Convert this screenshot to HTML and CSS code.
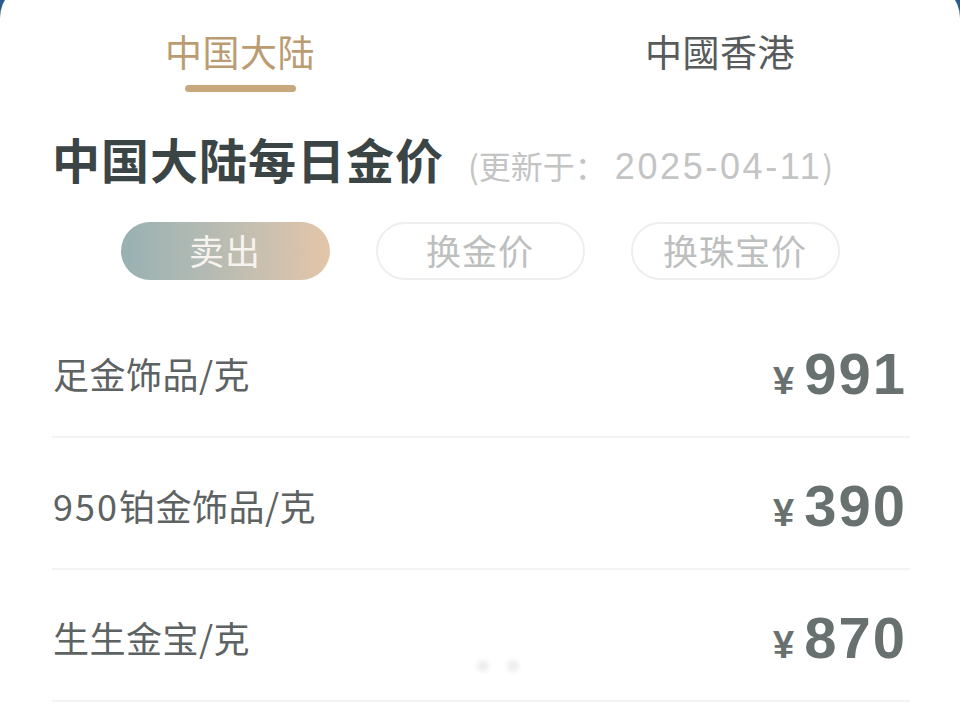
FILE: index.html
```html
<!DOCTYPE html>
<html lang="zh-CN">
<head>
<meta charset="utf-8">
<title>每日金价</title>
<link rel="stylesheet" href="styles.css">
</head>
<body>
<div class="card">
  <div class="tabs">
    <div class="tab active"><span class="tab-label">中国大陆</span><span class="tab-bar"></span></div>
    <div class="tab"><span class="tab-label">中國香港</span></div>
  </div>
  <div class="title-row">
    <span class="title">中国大陆每日金价</span>
    <span class="updated">(更新于：<span class="date">2025-04-11</span>)</span>
  </div>
  <div class="pills">
    <div class="pill pill-active">卖出</div>
    <div class="pill">换金价</div>
    <div class="pill">换珠宝价</div>
  </div>
  <div class="rows">
    <div class="row">
      <span class="label">足金饰品/克</span>
      <span class="price"><span class="yen">¥</span><span class="num">991</span></span>
    </div>
    <div class="row">
      <span class="label"><span class="digits">950</span>铂金饰品/克</span>
      <span class="price"><span class="yen">¥</span><span class="num">390</span></span>
    </div>
    <div class="row row-last">
      <span class="label">生生金宝/克</span>
      <span class="price"><span class="yen">¥</span><span class="num">870</span></span>
      <span class="dot dot-1"></span>
      <span class="dot dot-2"></span>
    </div>
  </div>
</div>
</body>
</html>
```

FILE: styles.css
```css
html, body {
  margin: 0;
  padding: 0;
}
body {
  background: #2b5b8c;
  font-family: "Liberation Sans", "Noto Sans CJK SC", sans-serif;
  overflow: hidden;
  height: 718px;
}
.card {
  background: #ffffff;
  margin-top: -17px;
  border-radius: 35px 35px 0 0;
  height: 760px;
  padding-top: 46px;
  box-sizing: border-box;
}
.tabs {
  display: flex;
}
.tab {
  flex: 1;
  display: flex;
  flex-direction: column;
  align-items: center;
}
.tab-label {
  font-family: "Noto Sans CJK SC", sans-serif;
  font-size: 37px;
  line-height: 44px;
  color: #575b5b;
  letter-spacing: 0.5px;
}
.tab.active .tab-label {
  color: #bb9c72;
}
.tab-bar {
  display: block;
  width: 111px;
  height: 7px;
  margin-top: 12px;
  border-radius: 4px;
  background: #c8a87c;
}
.title-row {
  display: flex;
  align-items: baseline;
  margin-top: 36px;
  padding-left: 52px;
  height: 60px;
}
.title {
  font-family: "Noto Sans CJK SC", sans-serif;
  font-weight: 700;
  font-size: 48px;
  line-height: 60px;
  color: #3b4545;
  letter-spacing: 1px;
}
.updated {
  font-family: "Noto Sans CJK SC", sans-serif;
  font-size: 32px;
  color: #c3c4c4;
  margin-left: 24px;
}
.date {
  font-family: "Liberation Sans", sans-serif;
  font-size: 36px;
  letter-spacing: 2.6px;
  margin-left: 8px;
}
.pills {
  display: flex;
  justify-content: center;
  gap: 46px;
  margin-top: 34px;
}
.pill {
  width: 209px;
  height: 58px;
  box-sizing: border-box;
  border: 2px solid #eeeeee;
  border-radius: 29px;
  display: flex;
  align-items: center;
  justify-content: center;
  font-family: "Noto Sans CJK SC", sans-serif;
  font-size: 35px;
  color: #bdbebe;
  letter-spacing: 1px;
  padding-bottom: 3px;
}
.pill-active {
  border: none;
  background: linear-gradient(90deg, #98b1b2 0%, #b3bab3 40%, #cfc1af 75%, #e4c5a8 100%);
  color: #f7f3ee;
}
.rows {
  margin: 26px 50px 0 52px;
}
.row {
  position: relative;
  height: 132px;
  box-sizing: border-box;
  border-bottom: 2px solid #f3f3f3;
  display: flex;
  align-items: center;
  justify-content: space-between;
  padding-top: 4px;
}
.label {
  font-family: "Noto Sans CJK SC", sans-serif;
  font-size: 36px;
  color: #5d6262;
  padding-left: 1px;
  letter-spacing: 0.5px;
}
.digits {
  letter-spacing: 2px;
}
.price {
  display: flex;
  align-items: baseline;
  color: #687070;
  padding-right: 3px;
}
.yen {
  font-family: "Liberation Sans", sans-serif;
  font-weight: 700;
  font-size: 38px;
  margin-right: 10px;
}
.num {
  font-family: "Liberation Sans", sans-serif;
  font-weight: 700;
  font-size: 58px;
  letter-spacing: 2px;
}
.dot {
  position: absolute;
  top: 90px;
  width: 12px;
  height: 12px;
  border-radius: 50%;
  background: #eeeeee;
  filter: blur(2px);
}
.dot-1 { left: 425px; }
.dot-2 { left: 455px; }
```
